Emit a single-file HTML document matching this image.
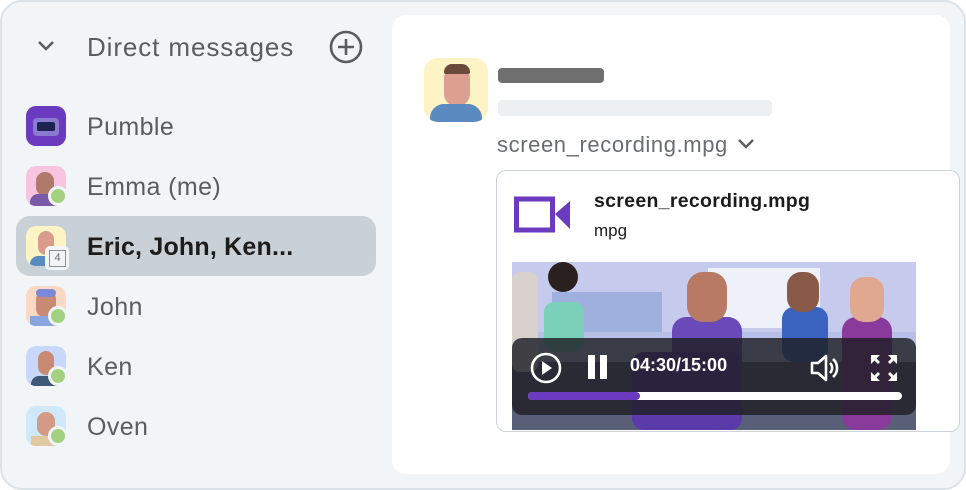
<!DOCTYPE html>
<html><head><style>
*{margin:0;padding:0;box-sizing:border-box}
body{width:966px;height:490px;background:#fff;font-family:"Liberation Sans",Arial,sans-serif;position:relative;overflow:hidden}
.outer{position:absolute;left:0;top:0;width:966px;height:490px;background:#f2f5f8;border:2px solid #dbe3e8;border-radius:22px}
.abs{position:absolute}
.name{position:absolute;left:87px;font-size:25px;color:#5a5d60;line-height:30px;letter-spacing:0.4px}
.av{position:absolute;left:26px;width:40px;height:40px;border-radius:10px;overflow:hidden}
.dot{position:absolute;left:48px;width:20px;height:20px;border-radius:50%;background:#a4d17f;border:3px solid #f2f5f8}
</style></head><body>
<div class="outer"></div>
<svg class="abs" style="left:36px;top:38px" width="20" height="16"><path d="M3 4l7 7 7-7" stroke="#5a5d60" stroke-width="2.5" fill="none"/></svg>
<div class="name" style="top:32px;font-size:26px;letter-spacing:0.9px">Direct messages</div>
<svg class="abs" style="left:329px;top:30px" width="34" height="34"><circle cx="17" cy="17" r="15" stroke="#5a5d60" stroke-width="2.6" fill="none"/><path d="M17 9v16M9 17h16" stroke="#5a5d60" stroke-width="2.6"/></svg>

<div class="av" style="top:106px;background:#6a3bbf"><div class="abs" style="left:7px;top:12px;width:26px;height:18px;background:#8a7ad0;border-radius:4px"></div><div class="abs" style="left:11px;top:16px;width:18px;height:9px;background:#1d2350;border-radius:2px"></div></div>
<div class="name" style="top:112px">Pumble</div>

<div class="av" style="top:166px;background:#f8c4df"><div class="abs" style="left:10px;top:6px;width:18px;height:24px;background:#b07a6a;border-radius:9px"></div><div class="abs" style="left:4px;top:28px;width:30px;height:14px;background:#7a5aa8;border-radius:8px 8px 0 0"></div></div>
<div class="dot" style="top:186px"></div>
<div class="name" style="top:172px">Emma (me)</div>

<div class="abs" style="left:16px;top:216px;width:360px;height:60px;background:#c9d1d6;border-radius:14px"></div>
<div class="av" style="top:226px;background:#fdf3c4"><div class="abs" style="left:12px;top:5px;width:16px;height:24px;background:#d99b8a;border-radius:8px"></div><div class="abs" style="left:4px;top:30px;width:30px;height:12px;background:#5a8ac0;border-radius:8px 8px 0 0"></div></div>
<div class="abs" style="left:45px;top:246px;width:24px;height:24px;background:#f2f5f8;border-radius:5px"></div>
<div class="abs" style="left:49px;top:250px;width:17px;height:17px;border:1.5px solid #8a9096;font-size:11px;color:#6a7076;text-align:center;line-height:14px">4</div>
<div class="name" style="top:232px;color:#1c1c1c;font-weight:bold;letter-spacing:0.2px">Eric, John, Ken...</div>

<div class="av" style="top:286px;background:#fcd9c4"><div class="abs" style="left:10px;top:5px;width:20px;height:26px;background:#c98a74;border-radius:8px"></div><div class="abs" style="left:10px;top:3px;width:20px;height:8px;background:#7a8ad8;border-radius:4px"></div><div class="abs" style="left:4px;top:30px;width:30px;height:12px;background:#8aa4e0"></div></div>
<div class="dot" style="top:306px"></div>
<div class="name" style="top:292px">John</div>

<div class="av" style="top:346px;background:#c8d8fb"><div class="abs" style="left:12px;top:5px;width:16px;height:24px;background:#c98a74;border-radius:8px"></div><div class="abs" style="left:5px;top:30px;width:28px;height:12px;background:#3e5a78;border-radius:8px 8px 0 0"></div></div>
<div class="dot" style="top:366px"></div>
<div class="name" style="top:352px">Ken</div>

<div class="av" style="top:406px;background:#cfe9fb"><div class="abs" style="left:11px;top:6px;width:18px;height:24px;background:#d49a84;border-radius:9px"></div><div class="abs" style="left:5px;top:30px;width:28px;height:12px;background:#e0c8a0"></div></div>
<div class="dot" style="top:426px"></div>
<div class="name" style="top:412px">Oven</div>

<div class="abs" style="left:392px;top:15px;width:558px;height:459px;background:#fff;border-radius:14px"></div>
<div class="abs" style="left:424px;top:58px;width:64px;height:64px;background:#fdf3c4;border-radius:14px;overflow:hidden"><div class="abs" style="left:20px;top:8px;width:26px;height:40px;background:#dba090;border-radius:12px"></div><div class="abs" style="left:20px;top:6px;width:26px;height:10px;background:#6a4a3a;border-radius:8px 8px 2px 2px"></div><div class="abs" style="left:6px;top:46px;width:52px;height:20px;background:#5a8ac0;border-radius:14px 14px 0 0"></div></div>
<div class="abs" style="left:498px;top:68px;width:106px;height:15px;background:#6f6f6f;border-radius:4px"></div>
<div class="abs" style="left:498px;top:100px;width:274px;height:16px;background:#eef0f2;border-radius:4px"></div>
<div class="abs" style="left:497px;top:132px;font-size:22px;letter-spacing:0.6px;color:#6a6d70">screen_recording.mpg</div>
<svg class="abs" style="left:736px;top:136px" width="20" height="16"><path d="M3 4l7 7 7-7" stroke="#5a5d60" stroke-width="2.4" fill="none"/></svg>

<div class="abs" style="left:496px;top:170px;width:464px;height:262px;border:1.5px solid #cdd3d8;border-radius:10px;background:#fff"></div>
<svg class="abs" style="left:514px;top:196px" width="58" height="38"><rect x="2.5" y="3" width="36" height="31" fill="none" stroke="#6a3bbf" stroke-width="5"/><path d="M41 18l15-13v28z" fill="#6a3bbf"/></svg>
<div class="abs" style="left:594px;top:190px;font-size:19.5px;letter-spacing:0.3px;font-weight:bold;color:#1c1c1c">screen_recording.mpg</div>
<div class="abs" style="left:594px;top:221px;font-size:17px;color:#1c1c1c">mpg</div>

<div class="abs" style="left:512px;top:262px;width:404px;height:168px;background:#b8bfe6;overflow:hidden">
 <div class="abs" style="left:0;top:0;width:404px;height:70px;background:#c6cbee"></div>
 <div class="abs" style="left:196px;top:6px;width:112px;height:60px;background:#eef0fa"></div>
 <div class="abs" style="left:40px;top:30px;width:110px;height:40px;background:#9fb0de"></div>
 <div class="abs" style="left:0;top:100px;width:404px;height:68px;background:#5a5f78"></div>
 <div class="abs" style="left:0;top:10px;width:26px;height:100px;background:#d8d0cc;border-radius:8px"></div>
 <div class="abs" style="left:36px;top:0;width:30px;height:30px;background:#2a2020;border-radius:50%"></div>
 <div class="abs" style="left:32px;top:40px;width:40px;height:50px;background:#7ad0b8;border-radius:10px"></div>
 <div class="abs" style="left:160px;top:55px;width:70px;height:60px;background:#6a4ab8;border-radius:14px"></div>
 <div class="abs" style="left:175px;top:10px;width:40px;height:50px;background:#b87a64;border-radius:16px"></div>
 <div class="abs" style="left:120px;top:90px;width:110px;height:78px;background:#5b3aaa;border-radius:12px"></div>
 <div class="abs" style="left:270px;top:45px;width:46px;height:55px;background:#3a64c0;border-radius:12px"></div>
 <div class="abs" style="left:275px;top:10px;width:32px;height:40px;background:#8a5a48;border-radius:14px"></div>
 <div class="abs" style="left:330px;top:55px;width:50px;height:113px;background:#8a3a9a;border-radius:14px"></div>
 <div class="abs" style="left:338px;top:15px;width:34px;height:45px;background:#e0a890;border-radius:14px"></div>
</div>
<div class="abs" style="left:512px;top:338px;width:404px;height:77px;background:rgba(30,30,36,.82);border-radius:10px"></div>
<svg class="abs" style="left:528px;top:350px" width="36" height="36"><circle cx="18" cy="18" r="14" stroke="#fff" stroke-width="2.6" fill="none"/><path d="M14 11l10 7-10 7z" fill="#fff"/></svg>
<div class="abs" style="left:588px;top:355px;width:7px;height:24px;background:#fff"></div>
<div class="abs" style="left:600px;top:355px;width:7px;height:24px;background:#fff"></div>
<div class="abs" style="left:630px;top:355px;font-size:18px;font-weight:bold;color:#fff">04:30/15:00</div>
<svg class="abs" style="left:808px;top:352px" width="32" height="32"><path d="M4 11h6l8-7v24l-8-7H4z" fill="none" stroke="#fff" stroke-width="2.6" stroke-linejoin="round"/><path d="M22 11a7 7 0 010 10M25 7a12 12 0 010 18" stroke="#fff" stroke-width="2.6" fill="none"/></svg>
<svg class="abs" style="left:868px;top:352px" width="32" height="32"><path d="M3 3h9L3 12zM29 3h-9l9 9zM3 29h9l-9-9zM29 29h-9l9-9z" fill="#fff"/><path d="M5 5l6 6M27 5l-6 6M5 27l6-6M27 27l-6-6" stroke="#fff" stroke-width="3"/></svg>
<div class="abs" style="left:528px;top:392px;width:374px;height:8px;background:#fff;border-radius:4px"></div>
<div class="abs" style="left:528px;top:392px;width:112px;height:8px;background:#6a3bbf;border-radius:4px"></div>
</body></html>
